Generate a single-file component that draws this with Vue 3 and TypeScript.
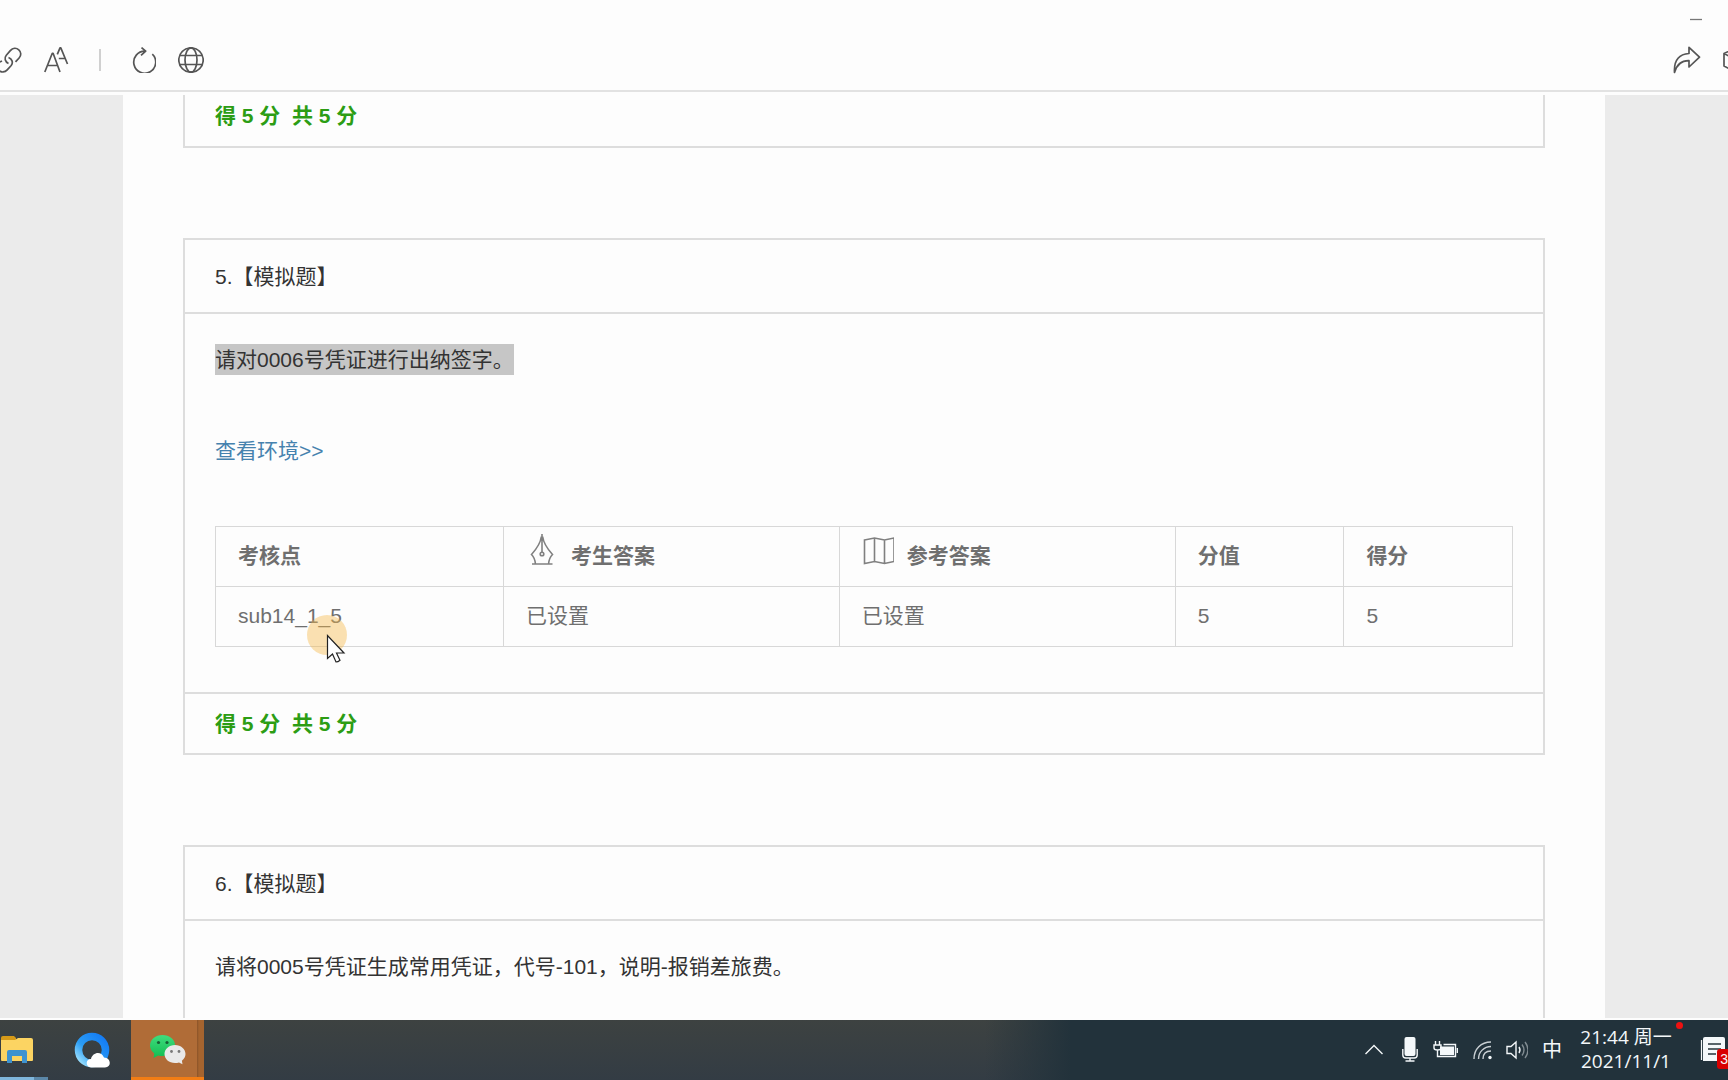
<script setup lang="ts">
interface Check {
  point: string
  answer: string
  reference: string
  full: number
  score: number
}

interface Question {
  no: number
  text: string
  selected?: boolean
  checks?: Check[]
  score?: number
  total?: number
}

const questions: Question[] = [
  {
    no: 5,
    text: '请对0006号凭证进行出纳签字。',
    selected: true,
    checks: [{ point: 'sub14_1_5', answer: '已设置', reference: '已设置', full: 5, score: 5 }],
    score: 5,
    total: 5,
  },
  { no: 6, text: '请将0005号凭证生成常用凭证，代号-101，说明-报销差旅费。' },
]
</script>

<template>
  <div class="desktop">
    <header class="browser">
      <div class="titlebar">
        <button class="icon-btn" aria-label="最小化">
          <svg width="12" height="12" viewBox="0 0 12 12"><path d="M0 6.500h12" stroke="#777" stroke-width="1.300" /></svg>
        </button>
      </div>
      <div class="toolbar">
        <nav class="tools tools-left">
          <button class="icon-btn" aria-label="链接">
            <svg width="28" height="26" viewBox="0 0 28 26" class="line">
              <path d="M14.500 16.500c-3.500-1.500-4.500-5.500-2.200-8.300l4-4.600c2.500-2.800 6-3 8.500-.8 2.500 2.200 2.600 5.700.3 8.200l-3.600 3.800" />
              <path d="M14.500 10.500c3.500 1.300 5 5 2.700 8l-4 4.400c-2.300 2.500-5.900 2.800-8.300.6-2.400-2.200-2.500-5.500-.2-8l3.300-1.600" />
            </svg>
          </button>
          <button class="icon-btn" aria-label="字体">
            <svg width="26" height="26" viewBox="0 0 26 26" class="line">
              <path d="M.8 25 8.300 6.300h.8L16 25M3.200 18.500h10.500M13.300 7.400 16 .9h.8L23.500 17M14.800 11.500h6.300" />
            </svg>
          </button>
          <span class="separator"></span>
          <button class="icon-btn" aria-label="刷新">
            <svg width="26" height="26" viewBox="0 0 26 26" class="line">
              <path d="M22.300 7.200A11 11 0 1 1 15.300 4.200M11.500.6l4.200 3.500-4.700 4.300" />
            </svg>
          </button>
          <button class="icon-btn" aria-label="浏览器">
            <svg width="26" height="26" viewBox="0 0 26 26" class="line">
              <circle cx="13" cy="13" r="12.200" />
              <ellipse cx="13" cy="13" rx="6" ry="12.200" />
              <path d="M2 8.500h22M2 17.500h22" />
            </svg>
          </button>
        </nav>
        <nav class="tools tools-right">
          <button class="icon-btn" aria-label="分享">
            <svg width="28" height="28" viewBox="0 0 28 28" class="line">
              <path d="M1.500 26.500C.8 15 5 8.300 16 7.500V1.300l10.500 9.900L16 21v-6.300C9 14.500 4 18 1.500 26.500Z" />
            </svg>
          </button>
          <button class="icon-btn" aria-label="收藏">
            <svg width="26" height="26" viewBox="0 0 26 26" class="line">
              <path d="M1 6.500 12.500 1 24 6.500V19l-11.500 6L1 19ZM1 6.500l11.500 6 11.500-6M12.500 12.500V25" />
            </svg>
          </button>
        </nav>
      </div>
    </header>

    <main class="viewport">
      <div class="sheet">
        <section class="card continued">
          <footer class="card-foot">得 5 分&nbsp; 共 5 分</footer>
        </section>

        <section v-for="q in questions" :key="q.no" class="card">
          <h2 class="card-head">{{ q.no }}.【模拟题】</h2>
          <div class="card-body">
            <p class="question"><span :class="{ selected: q.selected }">{{ q.text }}</span></p>
            <template v-if="q.checks">
              <p class="env"><a href="#">查看环境&gt;&gt;</a></p>
              <table class="checks">
                <colgroup>
                  <col class="col-point" /><col class="col-answer" /><col class="col-answer" />
                  <col class="col-score" /><col class="col-score" />
                </colgroup>
                <thead>
                  <tr>
                    <th>考核点</th>
                    <th>
                      <span class="with-icon">
                        <svg width="32" height="32" viewBox="0 0 32 32" class="table-icon">
                          <path d="M16 0v18M15.400 2.500C14.500 9 10.500 15 5.500 20.500c2 2 3.500 4.500 4 9.500h13c.5-5 2-7.500 4-9.500C21.500 15 17.500 9 16.600 2.500M6 30h20.500" />
                          <circle cx="16" cy="20" r="1.800" />
                        </svg>
                        考生答案
                      </span>
                    </th>
                    <th>
                      <span class="with-icon">
                        <svg width="32" height="32" viewBox="0 0 32 32" class="table-icon">
                          <path d="M2.500 6 12.500 4l10 2 9.500-2v23.500l-9.500 2-10-2-10 2ZM12.500 4v23.500M22.500 6v23.500" />
                        </svg>
                        参考答案
                      </span>
                    </th>
                    <th>分值</th>
                    <th>得分</th>
                  </tr>
                </thead>
                <tbody>
                  <tr v-for="c in q.checks" :key="c.point">
                    <td>{{ c.point }}</td>
                    <td>{{ c.answer }}</td>
                    <td>{{ c.reference }}</td>
                    <td>{{ c.full }}</td>
                    <td>{{ c.score }}</td>
                  </tr>
                </tbody>
              </table>
            </template>
          </div>
          <footer v-if="q.total" class="card-foot">得 {{ q.score }} 分&nbsp; 共 {{ q.total }} 分</footer>
        </section>
      </div>
    </main>

    <div class="taskbar">
      <div class="apps">
        <button class="app explorer" aria-label="文件资源管理器">
          <svg width="34" height="28" viewBox="0 0 34 28">
            <path d="M1 2q0-2 2-2h11l2 2v3H1Z" fill="#d69a18" />
            <path d="M1 4h14l3-2h13q2 0 2 2v20q0 1-1 1H2q-1 0-1-1Z" fill="#fcd462" />
            <path d="M7 27V16q0-2 2-2h16q2 0 2 2v11h-5v-7H12v7Z" fill="#3e93d0" />
          </svg>
        </button>
        <button class="app qq" aria-label="QQ浏览器">
          <svg width="36" height="36" viewBox="0 0 36 36">
            <defs>
              <linearGradient id="ring" x1="0" y1="1" x2="1" y2="0">
                <stop offset="0" stop-color="#a6e6ff" />
                <stop offset=".4" stop-color="#2b9df4" />
                <stop offset="1" stop-color="#1279f5" />
              </linearGradient>
            </defs>
            <circle cx="18" cy="18" r="13.500" fill="none" stroke="url(#ring)" stroke-width="7.500" />
            <path d="M17 35.500c-5.500 0-6-8.500 0-8.500 1.500-6.500 10-8.500 13-1.500 7 0 8 10 1 10Z" fill="#fff" />
          </svg>
        </button>
        <button class="app wechat" aria-label="微信">
          <svg width="38" height="32" viewBox="0 0 38 32">
            <defs>
              <linearGradient id="bubble" x1="0" y1="0" x2="0" y2="1">
                <stop offset="0" stop-color="#3fdc7d" />
                <stop offset="1" stop-color="#12bd52" />
              </linearGradient>
            </defs>
            <path d="M13.500 1C6.500 1 1 5.600 1 11.500c0 3.300 1.700 6 4.300 8L4.500 24l4.700-2.500c1.400.4 2.800.5 4.300.5 7 0 12.500-4.600 12.500-10.500S20.500 1 13.500 1Z" fill="url(#bubble)" />
            <circle cx="9.500" cy="8.500" r="1.600" fill="#176136" />
            <circle cx="18" cy="8.500" r="1.600" fill="#176136" />
            <path d="M26 11c-6 0-10.500 4-10.500 9S20 29 26 29c1.500 0 2.700-.2 4-.6l3.500 1.900-.6-3.600c2.200-1.600 3.600-4 3.600-6.700 0-5-4.500-9-10.500-9Z" fill="#e9e9e9" />
            <circle cx="22.500" cy="17.500" r="1.400" fill="#777" />
            <circle cx="30" cy="17.500" r="1.400" fill="#777" />
          </svg>
        </button>
      </div>

      <div class="tray">
        <svg width="24" height="20" viewBox="0 0 24 20" class="glyph"><path d="M1.500 14 10 5.500l8.500 8.500" /></svg>
        <svg width="16" height="26" viewBox="0 0 16 26" class="glyph">
          <rect x="2.500" y="0" width="11" height="19" rx="2" fill="#f4f8fa" stroke="none" />
          <path d="M.8 12v6q0 3 3 3h8.400q3 0 3-3v-6M8 21v3M3.500 24h9" />
        </svg>
        <svg width="26" height="20" viewBox="0 0 26 20" class="glyph">
          <path d="M3.500 1v4M7.500 1v4M2 5h7v3q0 2-3.500 2T2 8ZM5.500 10v6.500h18V4.500H11.500" />
          <rect x="8" y="6.500" width="14" height="8.500" fill="#f4f8fa" stroke="none" />
          <path d="M25.300 8v5" />
        </svg>
        <svg width="20" height="20" viewBox="0 0 20 20" class="glyph">
          <g opacity=".8"><path d="M2 19C2 9 9 2 19 2M6.500 19C6.500 12 12 6.500 19 6.500M11 19c0-5 3-8 8-8" /></g>
          <circle cx="18" cy="17.500" r="1.700" fill="#f4f8fa" stroke="none" />
        </svg>
        <svg width="22" height="20" viewBox="0 0 22 20" class="glyph">
          <path d="M1 6.500h4L10 2v16L5 13.500H1ZM13 7q2 3 0 6" />
          <g opacity=".45"><path d="M16 4.500q4 5.500 0 11M19 2q6 8 0 16" /></g>
        </svg>
        <span class="ime">中</span>
        <div class="clock"><span>21:44 周一</span><span>2021/11/1</span><i class="dot"></i></div>
        <div class="notice">
          <svg width="26" height="26" viewBox="0 0 26 26">
            <path d="M1.500 3v20" stroke="#f4f8fa" stroke-width="1.200" />
            <path d="M5 0h18q2 0 2 2v22H3V2q0-2 2-2Z" fill="#f4f8fa" />
            <path d="M8 7h13M8 12h13M8 17h8" stroke="#24333b" stroke-width="1.600" />
          </svg>
          <span class="badge">3</span>
        </div>
      </div>
    </div>

    <div class="pointer">
      <svg width="44" height="50" viewBox="0 0 44 50">
        <path d="M20.500 20.500v23l5-4.500 3.500 8q2 0 4-1.700l-3.500-7.300h7.500Z" fill="#fff" stroke="#222" stroke-width="1.200" />
      </svg>
    </div>
  </div>
</template>

<style>
body {
  margin: 0;
}
</style>

<style scoped>
.desktop {
  position: relative;
  display: flex;
  flex-direction: column;
  height: 100vh;
  overflow: hidden;
  background: #fdfdfd;
  font-family: "Liberation Sans", "Noto Sans CJK SC", sans-serif;
  font-size: 21px;
  line-height: 31px;
  color: #333;
}

button {
  padding: 0;
  border: 0;
  background: none;
}

svg {
  display: block;
  fill: none;
}

.browser {
  flex: none;
  margin-bottom: 3px;
  border-bottom: 2px solid #e2e2e2;
}

.titlebar {
  display: flex;
  justify-content: flex-end;
  align-items: center;
  height: 38px;
  padding-right: 26px;
}

.toolbar {
  display: flex;
  justify-content: space-between;
  height: 52px;
}

.tools {
  display: flex;
  align-items: center;
  gap: 22px;
  height: 44px;
}

.tools-left {
  margin-left: -6px;
}

.tools-right {
  margin-right: -21px;
}

.line {
  stroke: #555;
  stroke-width: 1.7;
  stroke-linejoin: round;
}

.separator {
  width: 2px;
  height: 22px;
  margin: 0 7px;
  background: #d0d0d0;
}

.viewport {
  flex: 1;
  min-height: 0;
  margin-bottom: 2px;
  padding: 0 123px;
  overflow: hidden;
  background: #ebebeb;
}

.sheet {
  display: flex;
  flex-direction: column;
  gap: 90px;
  padding: 0 60px;
  background: #fdfdfd;
}

.card {
  border: 2px solid #ddd;
}

.card-head {
  margin: 0;
  padding: 21px 30px 20px;
  border-bottom: 2px solid #ddd;
  font-size: 21px;
  font-weight: 400;
}

.card-body {
  padding: 30px 30px 45px;
}

.card-foot {
  padding: 14px 30px;
  border-top: 2px solid #ddd;
  font-weight: 700;
  color: #2c9d14;
}

.continued {
  border-top: 0;
}

.continued .card-foot {
  padding: 5px 30px 15px;
  border-top: 0;
}

.question,
.env {
  display: flex;
  margin: 0;
}

.env {
  margin: 60px 0;
}

.selected {
  background: #c6c6c6;
}

a {
  color: #4682ae;
  text-decoration: none;
}

.checks {
  width: 100%;
  border-collapse: collapse;
  table-layout: fixed;
  color: #6f6f6f;
}

.col-point {
  width: 22.2%;
}

.col-answer {
  width: 25.9%;
}

.col-score {
  width: 13%;
}

.checks th,
.checks td {
  height: 31px;
  padding: 13px 22px 15px;
  border: 1px solid #d8d8d8;
  text-align: left;
}

.with-icon {
  display: flex;
  align-items: center;
  gap: 13px;
  height: 31px;
}

.table-icon {
  margin-bottom: 12px;
  stroke: #808080;
  stroke-width: 1.6;
}

.taskbar {
  display: flex;
  flex: none;
  justify-content: space-between;
  height: 60px;
  background: linear-gradient(90deg, transparent 57%, #22323b 62%), linear-gradient(#3d4241, #333c44);
}

.apps,
.tray {
  display: flex;
  align-items: center;
}

.app {
  display: flex;
  align-items: center;
  height: 60px;
}

.explorer {
  width: 48px;
  margin-right: 5px;
  background: linear-gradient(90deg, #7fb6dc 34px, #5b87a8 34px) bottom / 100% 3px no-repeat;
}

.qq {
  justify-content: center;
  width: 78px;
}

.wechat {
  justify-content: center;
  width: 73px;
  background:
    linear-gradient(#f27d15, #f27d15) bottom / 100% 3px no-repeat,
    linear-gradient(90deg, #b06c37 66px, #8a5329 66px, #a5642f 68px);
}

.tray {
  gap: 14px;
  color: #f4f8fa;
}

.glyph {
  stroke: #f4f8fa;
  stroke-width: 1.4;
}

.ime {
  width: 20px;
  font-size: 20px;
}

.clock {
  position: relative;
  display: flex;
  flex-direction: column;
  align-items: center;
  width: 92px;
  margin: 0 14px 0 4px;
  padding-bottom: 2px;
  font-family: "Open Sans", "Noto Sans CJK SC", sans-serif;
  font-size: 19px;
  line-height: 24px;
  white-space: nowrap;
}

.dot {
  position: absolute;
  top: -3px;
  right: -11px;
  width: 7px;
  height: 7px;
  border-radius: 50%;
  background: #e11;
}

.notice {
  position: relative;
  width: 28px;
}

.badge {
  position: absolute;
  top: 12px;
  right: 0;
  width: 11px;
  height: 20px;
  border-radius: 3px 0 0 3px;
  background: #d80000;
  font-size: 14px;
  line-height: 20px;
  text-align: right;
}

.pointer {
  position: absolute;
  top: 615px;
  left: 307px;
  width: 40px;
  height: 40px;
  border-radius: 50%;
  background: rgba(246, 184, 72, 0.42);
}
</style>
